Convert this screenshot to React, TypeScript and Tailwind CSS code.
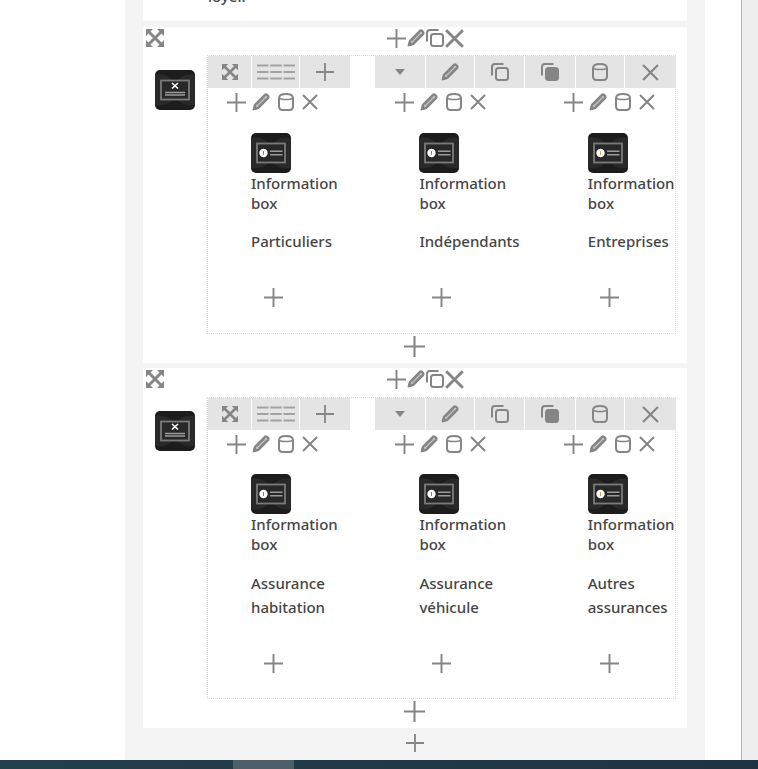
const C = "#858585";

function Plus({ s = 20, w = 2 }: { s?: number; w?: number }) {
  return (
    <svg width={s} height={s} viewBox="0 0 20 20" className="shrink-0">
      <path d="M10 0V20M0 10H20" stroke={C} strokeWidth={w} fill="none" />
    </svg>
  );
}
function Cross({ s = 16, w = 2 }: { s?: number; w?: number }) {
  return (
    <svg width={s} height={s} viewBox="0 0 16 16" className="shrink-0">
      <path d="M1 1L15 15M15 1L1 15" stroke={C} strokeWidth={w} fill="none" />
    </svg>
  );
}
function Pencil({ s = 18 }: { s?: number }) {
  return (
    <svg width={s} height={s} viewBox="0.5 0.5 17 17" className="shrink-0">
      <path d="M2.3 15.7L3.4 11.6L12.6 2.4C13.2 1.8 14.2 1.8 14.8 2.4L15.6 3.2C16.2 3.8 16.2 4.8 15.6 5.4L6.4 14.6Z" fill="#c4c4c4" stroke={C} strokeWidth="2.2" strokeLinejoin="round" />
      <path d="M1 17L2.6 11.5L6.5 15.4Z" fill={C} />
      <path d="M5.2 11.2L12.5 3.9M6.8 12.8L14.1 5.5" stroke={C} strokeWidth="1" />
    </svg>
  );
}
function Can({ s = 18 }: { s?: number }) {
  return (
    <svg width={s} height={s} viewBox="0 0 18 18" className="shrink-0">
      <path d="M2 5.2C2 2.6 5 1 9 1C13 1 16 2.6 16 5.2V13C16 15.4 14.6 17 12.5 17H5.5C3.4 17 2 15.4 2 13Z" fill="none" stroke={C} strokeWidth="2" />
      <path d="M2.5 5.2C4.5 7 13.5 7 15.5 5.2" fill="none" stroke={C} strokeWidth="1.5" />
    </svg>
  );
}
function Copy({ s = 18, filled = false }: { s?: number; filled?: boolean }) {
  return (
    <svg width={s} height={s} viewBox="0 0 18 18" className="shrink-0">
      <path d="M12.5 1H4C2.3 1 1 2.3 1 4V12.5" fill="none" stroke={C} strokeWidth="2" />
      <rect x="5" y="5" width="12" height="12" rx="2.5" fill={filled ? C : "none"} stroke={C} strokeWidth="2" />
    </svg>
  );
}
function Expand({ s = 18 }: { s?: number }) {
  return (
    <svg width={s} height={s} viewBox="0 0 18 18" className="shrink-0">
      <path d="M0 0H7L0 7ZM18 0V7L11 0ZM18 18H11L18 11ZM0 18V11L7 18Z" fill={C} />
      <path d="M2.5 2.5L15.5 15.5M15.5 2.5L2.5 15.5" stroke={C} strokeWidth="2.9" />
    </svg>
  );
}
function Lines() {
  return (
    <svg width="38" height="16" viewBox="0 0 38 16" className="shrink-0">
      <path d="M0 1.5H11.5M13.25 1.5H24.75M26.5 1.5H38M0 8H11.5M13.25 8H24.75M26.5 8H38M0 14.5H11.5M13.25 14.5H24.75M26.5 14.5H38" stroke="#a2a2a2" strokeWidth="2" />
    </svg>
  );
}
function Caret() {
  return (
    <svg width="10" height="6" viewBox="0 0 10 6" className="shrink-0">
      <path d="M0 0H10L5 6Z" fill={C} />
    </svg>
  );
}
function Tile({ info = false, dot = "#4a90d9" }: { info?: boolean; dot?: string }) {
  return (
    <svg width="40" height="40" viewBox="0 0 40 40" className="shrink-0 block">
      <rect width="40" height="40" rx="5" fill="#1c1c1c" />
      <path d="M0 5C12 3 16 9 20 12C24 9 28 3 40 5V35C28 37 24 31 20 28C16 31 12 37 0 35Z" fill="#292929" />
      <rect x="6" y="10.5" width="28" height="19" fill="#282828" stroke="#7a7a7a" strokeWidth="1.8" />
      {info ? (
        <>
          <circle cx="12.5" cy="20" r="4.2" fill="#fff" />
          <rect x="12" y="18" width="1" height="4" fill={dot} />
          <path d="M19 18.2H31.5M19 21.8H31.5" stroke="#9a9a9a" strokeWidth="1.6" />
        </>
      ) : (
        <>
          <path d="M17 13L23 18.5M23 13L17 18.5" stroke="#fff" strokeWidth="1.6" />
          <path d="M10 22.5H30M10 25H30" stroke="#9a9a9a" strokeWidth="1.6" />
        </>
      )}
    </svg>
  );
}
function ToolButton({ className, children }: { className: string; children: React.ReactNode }) {
  return <div className={`h-8 bg-[#e4e4e4] flex items-center justify-center ${className}`}>{children}</div>;
}
function Column({ title, dot, tall }: { title: string; dot?: string; tall?: boolean }) {
  return (
    <div className="w-[168.4px] shrink-0 flex flex-col">
      <div className={`pl-[19px] pt-[5px] flex items-start ${tall ? "h-[44px]" : "h-[45px]"}`}>
        <div className="flex items-center h-[18px]">
          <Plus s={19} />
          <span className="ml-[6px]"><Pencil s={18} /></span>
          <span className="ml-[7px]"><Can s={18} /></span>
          <span className="ml-[7px]"><Cross s={16} /></span>
        </div>
      </div>
      <div className="pl-[43px] w-[140px]">
        <Tile info dot={dot} />
        <div className="w-[92px] text-[15px] leading-5 font-medium text-[#454545]">Information box</div>
        <div className={`w-[92px] text-[15px] leading-6 font-medium text-[#454545] whitespace-pre-line ${tall ? "mt-[17px]" : "mt-[16px]"}`}>{title}</div>
      </div>
      <div className="pl-[55.5px] mt-[35px]"><Plus s={19} /></div>
    </div>
  );
}
function Card({ cols, height, tall }: { cols: { t: string; d?: string }[]; height: string; tall?: boolean }) {
  return (
    <section className={`w-[544px] bg-white pt-[2px] ${height}`}>
      <div className="relative h-[18px] mx-[3px] flex items-center justify-center">
        <div className="absolute left-0 top-0"><Expand /></div>
        <div className="flex items-center gap-[1px] pl-[21px]">
          <Plus s={19} />
          <Pencil s={18} />
          <Copy s={18} />
          <Cross s={19} w={2.4} />
        </div>
      </div>
      <div className="flex mt-[8px]">
        <div className="w-[64px] pl-3 pt-[15px] shrink-0"><Tile /></div>
        <div className={tall ? "pt-px" : ""}>
          <div className={`w-[469px] border border-dotted border-[#d8d8d8] overflow-visible ${tall ? "h-[302px]" : "h-[279px]"}`}>
            <div className="flex h-8">
              <div className="flex gap-px">
                <ToolButton className="w-[43px]"><Expand s={16} /></ToolButton>
                <ToolButton className="w-[47px]"><Lines /></ToolButton>
                <ToolButton className="w-[50px]"><Plus s={18} /></ToolButton>
              </div>
              <div className="flex gap-px ml-[25px]">
                <ToolButton className="w-[50px]"><Caret /></ToolButton>
                <ToolButton className="w-[48px]"><Pencil /></ToolButton>
                <ToolButton className="w-[49px]"><Copy /></ToolButton>
                <ToolButton className="w-[50px]"><Copy filled /></ToolButton>
                <ToolButton className="w-[48px]"><Can /></ToolButton>
                <ToolButton className="w-[51px]"><Cross s={17} /></ToolButton>
              </div>
            </div>
            <div className="flex">
              {cols.map((c) => <Column key={c.t} title={c.t} dot={c.d} tall={tall} />)}
            </div>
          </div>
          <div className="ml-[197px] mt-[2px] w-5">
            <Plus s={21} />
          </div>
        </div>
      </div>
    </section>
  );
}
export default function App() {
  return (
    <div className="w-[758px] h-[769px] overflow-hidden flex flex-col bg-white font-['Noto_Sans','Open_Sans',sans-serif]">
      <div className="flex h-[760px]">
        <div className="w-[125px] shrink-0" />
        <main className="w-[580px] shrink-0 bg-[#f4f4f4] pl-[18px] flex flex-col">
          <div className="w-[544px] h-[21px] bg-white overflow-hidden pl-[65px] text-[15px] leading-5 font-medium text-[#454545] shrink-0">
            <span className="block mt-[-14px]">loyer.</span>
          </div>
          <div className="mt-[6px] flex flex-col gap-[5px]">
            <Card height="h-[336px]" cols={[{ t: "Particuliers" }, { t: "Indépendants" }, { t: "Entreprises", d: "#d9a14a" }]} />
            <Card height="h-[360px]" tall cols={[{ t: "Assurance habitation" }, { t: "Assurance véhicule" }, { t: "Autres assurances", d: "#d9a14a" }]} />
          </div>
          <div className="ml-[263px] mt-[6px]"><Plus s={18} /></div>
        </main>
        <div className="w-[36px] shrink-0" />
        <div className="flex-1 border-l border-[#b4b4b4] bg-[#eeeeee]" />
      </div>
      <div className="h-[9px] bg-gradient-to-r from-[#23404b] to-[#1f3244] pl-[233px]">
        <div className="w-[61px] h-full bg-[#4f5f69]" />
      </div>
    </div>
  );
}
